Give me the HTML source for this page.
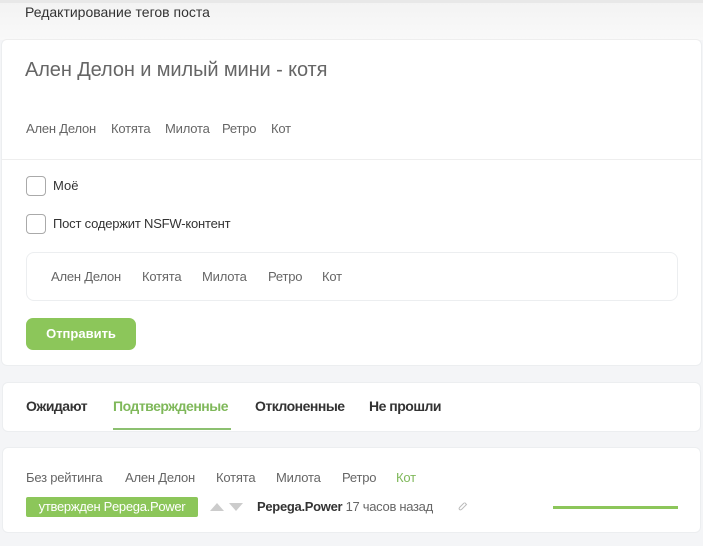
<!DOCTYPE html>
<html><head><meta charset="utf-8"><style>
*{margin:0;padding:0;box-sizing:border-box}
body{width:703px;height:546px;background:#f4f5f7;font-family:"Liberation Sans",sans-serif;position:relative;overflow:hidden;color:#333}
.abs{position:absolute;white-space:nowrap}
.hdr{position:absolute;left:0;top:0;width:703px;height:40px;background:linear-gradient(#f3f3f3,#f9f9f9);border-top:3px solid #e8e8e8}
.card{position:absolute;background:#fff;border:1px solid #eceef0;border-radius:6px}
.t{position:absolute;white-space:nowrap;font-size:13px;color:#666;letter-spacing:-0.2px}
.cb{position:absolute;width:20px;height:20px;border:1px solid #aaa;border-radius:4px;background:#fff}
.tab{position:absolute;white-space:nowrap;top:398px;font-size:14px;color:#333;font-weight:bold;letter-spacing:-0.5px}
</style></head><body>
<div class="hdr"></div>
<div class="abs" style="left:25px;top:4px;font-size:14px;color:#333">Редактирование тегов поста</div>
<div class="card" style="left:1px;top:39px;width:701px;height:327px;border-top:1px solid #eee"></div>
<div class="abs" style="left:25px;top:59px;font-size:20px;color:#666;letter-spacing:-0.1px">Ален Делон и милый мини - котя</div>
<span class="t" style="left:26px;top:121px">Ален Делон</span>
<span class="t" style="left:111px;top:121px">Котята</span>
<span class="t" style="left:165px;top:121px">Милота</span>
<span class="t" style="left:222px;top:121px">Ретро</span>
<span class="t" style="left:271px;top:121px">Кот</span>
<div class="abs" style="left:2px;top:159px;width:699px;height:1px;background:#eee"></div>
<div class="cb" style="left:26px;top:176px"></div>
<div class="abs" style="left:53px;top:178px;font-size:13px;color:#333">Моё</div>
<div class="cb" style="left:26px;top:214px"></div>
<div class="abs" style="left:53px;top:216px;font-size:13px;color:#333;letter-spacing:-0.2px">Пост содержит NSFW-контент</div>
<div class="card" style="left:26px;top:252px;width:652px;height:49px;border-radius:8px"></div>
<span class="t" style="left:51px;top:269px">Ален Делон</span>
<span class="t" style="left:142px;top:269px">Котята</span>
<span class="t" style="left:202px;top:269px">Милота</span>
<span class="t" style="left:268px;top:269px">Ретро</span>
<span class="t" style="left:322px;top:269px">Кот</span>
<div class="abs" style="left:26px;top:318px;width:110px;height:32px;background:#8cc65a;border-radius:7px;color:#fff;font-weight:bold;font-size:13px;text-align:center;line-height:32px">Отправить</div>
<div class="card" style="left:2px;top:382px;width:699px;height:50px"></div>
<div class="tab" style="left:26px">Ожидают</div>
<div class="tab" style="left:113px;color:#7fb85a">Подтвержденные</div>
<div class="abs" style="left:113px;top:428px;width:118px;height:2px;background:#8cc070"></div>
<div class="tab" style="left:255px">Отклоненные</div>
<div class="tab" style="left:369px">Не прошли</div>
<div class="card" style="left:2px;top:447px;width:699px;height:86px"></div>
<span class="t" style="left:26px;top:470px">Без рейтинга</span>
<span class="t" style="left:125px;top:470px">Ален Делон</span>
<span class="t" style="left:216px;top:470px">Котята</span>
<span class="t" style="left:276px;top:470px">Милота</span>
<span class="t" style="left:342px;top:470px">Ретро</span>
<span class="t" style="left:396px;top:470px;color:#7fb85a">Кот</span>
<div class="abs" style="left:26px;top:497px;width:172px;height:20px;background:#8cc65a;border-radius:2px;color:#fff;font-size:13px;line-height:20px;text-align:center;letter-spacing:-0.3px">утвержден Pepega.Power</div>
<svg class="abs" style="left:210px;top:502px" width="36" height="10"><polygon points="0,9 7,1 14,9" fill="#ccc"/><polygon points="19,1 33,1 26,9" fill="#ccc"/></svg>
<div class="abs" style="left:257px;top:499px;font-size:13px;color:#333;letter-spacing:-0.3px"><b>Pepega.Power</b> <span style="color:#666">17 часов назад</span></div>
<svg class="abs" style="left:458px;top:501px" width="10" height="11"><path d="M6.5 1.5 L8.5 3.5 L4 8 Q2.5 9.5 1.5 8.5 Q0.5 7.5 2 6 L6 2" fill="none" stroke="#bbb" stroke-width="1"/></svg>
<div class="abs" style="left:553px;top:506px;width:125px;height:3px;background:#8cc65a"></div>
</body></html>
